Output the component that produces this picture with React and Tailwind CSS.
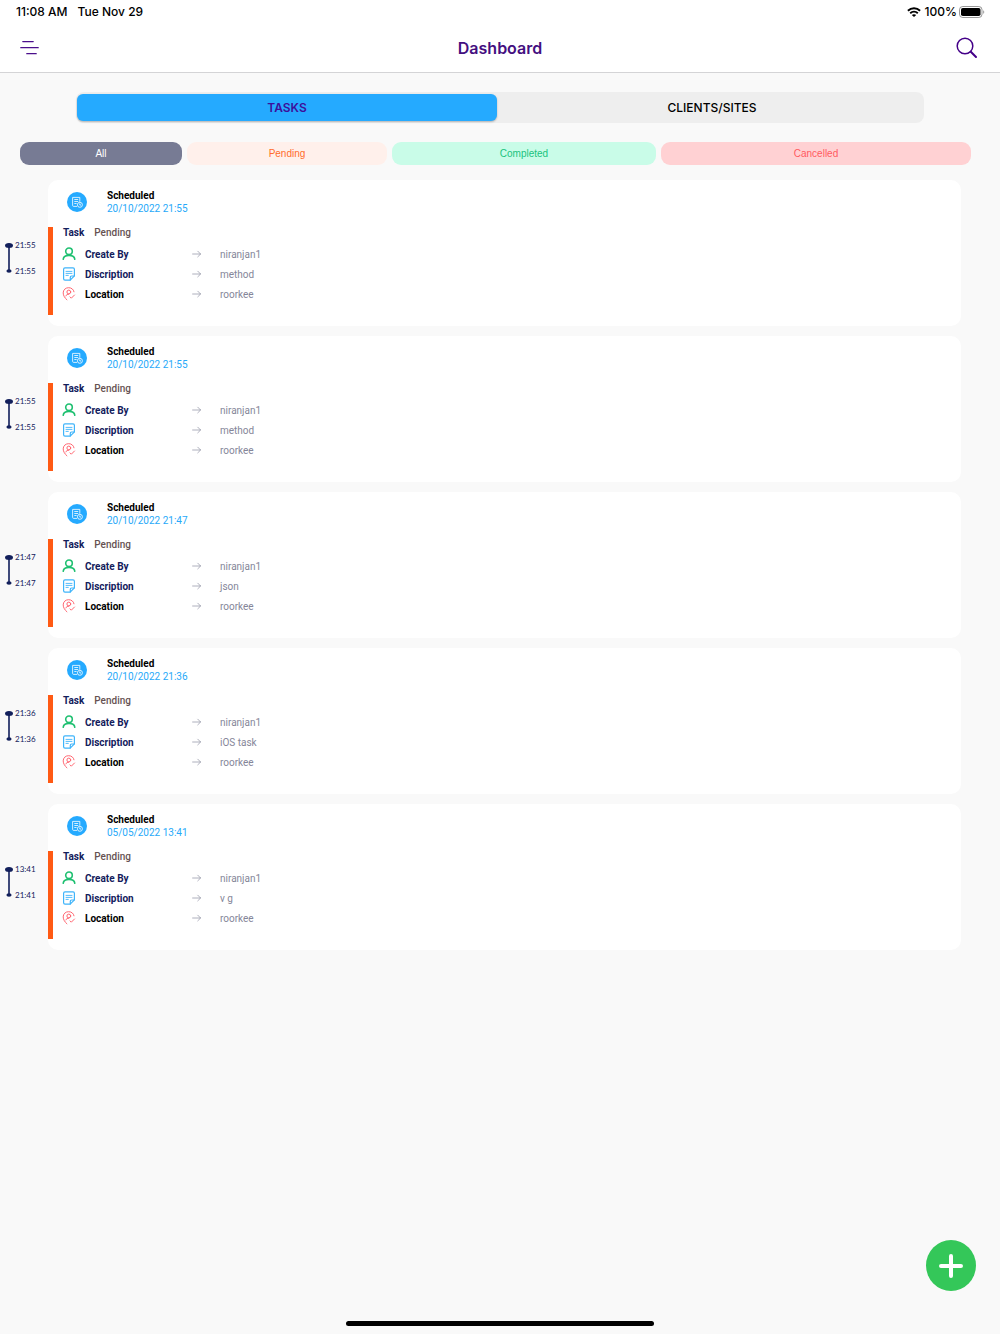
import { useState } from "react";

const filters = [
  { name: "All", className: "bg-[#777b94] text-white" },
  { name: "Pending", className: "bg-[#fff0eb] text-[#ff6c2c]" },
  { name: "Completed", className: "bg-[#c9fce8] text-[#18c37d]" },
  { name: "Cancelled", className: "bg-[#ffd1d3] text-[#ff5a60]" },
];

const tasks = [
  { date: "20/10/2022 21:55", start: "21:55", end: "21:55", by: "niranjan1", description: "method", location: "roorkee" },
  { date: "20/10/2022 21:55", start: "21:55", end: "21:55", by: "niranjan1", description: "method", location: "roorkee" },
  { date: "20/10/2022 21:47", start: "21:47", end: "21:47", by: "niranjan1", description: "json", location: "roorkee" },
  { date: "20/10/2022 21:36", start: "21:36", end: "21:36", by: "niranjan1", description: "iOS task", location: "roorkee" },
  { date: "05/05/2022 13:41", start: "13:41", end: "21:41", by: "niranjan1", description: "v g", location: "roorkee" },
];

function WifiIcon() {
  return (
    <svg className="h-[10px] w-[14px]" viewBox="0 0 14 10" fill="none" stroke="#000" strokeWidth="1.9">
      <path d="M0.9 3.8C4.4 0.4 9.6 0.4 13.1 3.8" />
      <path d="M3.2 6.2C5.4 4.2 8.6 4.2 10.8 6.2" />
      <path d="M7 9.9L4.8 7.9C6.1 6.9 7.9 6.9 9.2 7.9Z" fill="#000" stroke="none" />
    </svg>
  );
}

function BatteryIcon() {
  return (
    <svg className="h-3 w-[26px]" viewBox="0 0 26 12" fill="none">
      <rect x="0.5" y="0.5" width="22.5" height="11" rx="3.2" stroke="#000" strokeOpacity="0.4" />
      <rect x="2" y="2" width="19.5" height="8" rx="1.8" fill="#000" />
      <path d="M24.2 4.2C25.6 4.7 25.6 7.3 24.2 7.8Z" fill="#000" fillOpacity="0.4" />
    </svg>
  );
}

function MenuIcon() {
  return (
    <svg className="h-4 w-5" viewBox="0 0 20 16" stroke="#4b0f8c" strokeWidth="1.3" strokeLinecap="round">
      <path d="M2.8 1.6H13.2M0.8 7.7H18.2M6.8 13.7H16.2" />
    </svg>
  );
}

function SearchIcon() {
  return (
    <svg className="h-[22px] w-[22px]" viewBox="0 0 22 22" fill="none" stroke="#440088" strokeLinecap="round">
      <circle cx="9" cy="9" r="7.8" strokeWidth="1.5" />
      <path d="M14.8 14.8L20 20" strokeWidth="2" />
    </svg>
  );
}

function ScheduledIcon() {
  return (
    <svg className="h-5 w-5 shrink-0" viewBox="0 0 20 20" fill="none" stroke="#fff" strokeWidth="0.8">
      <circle cx="10" cy="10" r="10" fill="#25aaff" stroke="none" />
      <path d="M10 14.4H6.6C6 14.4 5.6 14 5.6 13.4V5.4H12.8V9.8" />
      <path d="M7.3 7.5H11.2M7.3 9.5H11.2M7.3 11.5H9.6" />
      <circle cx="12.9" cy="12.8" r="2.5" />
      <path d="M12.8 11.4V13H14" />
    </svg>
  );
}

function PersonIcon() {
  return (
    <svg className="h-[14px] w-[14px]" viewBox="0 0 14 14" fill="none" stroke="#1fc071" strokeWidth="1.6" strokeLinecap="round">
      <circle cx="7" cy="4.3" r="3.3" />
      <path d="M1.2 12.3C1.5 9.6 3.9 8.4 7 8.4C10.1 8.4 12.5 9.6 12.8 12.3" />
    </svg>
  );
}

function NoteIcon() {
  return (
    <svg className="h-[14px] w-[14px]" viewBox="0 0 14 14" fill="none" stroke="#3fb4fa" strokeWidth="1.2" strokeLinecap="round" strokeLinejoin="round">
      <path d="M12.4 8.9V2.2C12.4 1.3 11.8 0.8 11 0.8H3C2.2 0.8 1.6 1.3 1.6 2.2V11.8C1.6 12.7 2.2 13.2 3 13.2H8.2L12.4 8.9Z" />
      <path d="M8.3 13V10.2C8.3 9.4 8.8 9 9.5 9H12.2" />
      <path d="M4 4.4H10M4 6.4H10M4 8.4H6.3" strokeWidth="0.9" />
    </svg>
  );
}

function PinIcon() {
  return (
    <svg className="h-[14px] w-[14px]" viewBox="0 0 14 14" fill="none" stroke="#ff6570" strokeWidth="1" strokeLinecap="round" strokeLinejoin="round">
      <path d="M4.9 12.8C2.8 11 1.2 8.5 1.2 5.9C1.2 2.8 3.6 0.7 6.6 0.7C9.4 0.7 11.6 2.4 12 4.8" />
      <circle cx="6.8" cy="5" r="1.9" />
      <path d="M3.9 8.9C4.3 7.7 5.3 7.2 6.8 7.2" />
      <path d="M8 9.9L9.3 11.2L12.5 8" />
    </svg>
  );
}

function ArrowIcon() {
  return (
    <svg className="h-2 w-[10px]" viewBox="0 0 10 8" fill="none" stroke="#9a9cac" strokeWidth="0.8" strokeLinecap="round" strokeLinejoin="round">
      <path d="M0.6 4H8.6M5.8 1.2L8.6 4L5.8 6.8" />
    </svg>
  );
}

function DetailRow({ icon, label, labelClass, value }) {
  return (
    <div className="flex h-5 items-center">
      <span className="w-[23px] shrink-0">{icon}</span>
      <dt className={`w-[107px] shrink-0 font-bold ${labelClass}`}>{label}</dt>
      <span className="w-7 shrink-0">
        <ArrowIcon />
      </span>
      <dd className="text-[#858699]">{value}</dd>
    </div>
  );
}

function TimeRail({ start, end }) {
  return (
    <div className="flex w-12 shrink-0 gap-[2px] pt-[60px] pl-[5px] font-[Lato,sans-serif] text-[8px] leading-[10px] text-[#13205c]">
      <svg className="h-9 w-2 shrink-0" viewBox="0 0 8 36" fill="#13205c">
        <ellipse cx="4" cy="5.5" rx="4" ry="2.5" />
        <rect x="3.2" y="5" width="1.6" height="25" />
        <ellipse cx="4" cy="31" rx="2.6" ry="1.7" />
      </svg>
      <div className="flex h-9 flex-col justify-between">
        <time>{start}</time>
        <time>{end}</time>
      </div>
    </div>
  );
}

function TaskItem({ task }) {
  return (
    <li className="flex">
      <TimeRail start={task.start} end={task.end} />
      <article className="flex-1 rounded-[10px] bg-white pt-[9px] pb-[11px] text-[10px]">
        <div className="flex items-center gap-5 pb-3 pl-[19px] leading-[13px]">
          <ScheduledIcon />
          <div>
            <h2 className="font-bold text-black">Scheduled</h2>
            <p className="text-[#27a9f9]">{task.date}</p>
          </div>
        </div>
        <div className="border-l-5 border-[#ff5a14] pb-[11px] pl-[9px]">
          <p className="flex gap-[10px] pl-px leading-3">
            <span className="font-bold text-[#13205c]">Task</span>
            <span className="font-medium text-[#665252]">Pending</span>
          </p>
          <dl className="pt-[5px]">
            <DetailRow icon={<PersonIcon />} label="Create By" labelClass="text-[#13205c]" value={task.by} />
            <DetailRow icon={<NoteIcon />} label="Discription" labelClass="text-[#13205c]" value={task.description} />
            <DetailRow icon={<PinIcon />} label="Location" labelClass="text-black" value={task.location} />
          </dl>
        </div>
      </article>
    </li>
  );
}

export default function App() {
  const [tab, setTab] = useState("tasks");

  const tabClass = (name) =>
    `rounded-md ${
      tab === name
        ? "bg-[#25aaff] font-semibold text-[#3d0f9b] shadow-[0_1px_2px_rgba(0,0,0,0.25)]"
        : "font-medium text-black"
    }`;

  return (
    <div className="min-h-screen bg-[#f9f9f9] font-[Roboto,sans-serif]">
      <header className="border-b border-[#d4d4d6] bg-white font-[Inter,sans-serif]">
        <div className="flex h-6 items-center justify-between pr-[15px] pl-4 text-xs font-medium text-black">
          <div className="flex gap-[10px]">
            <span>11:08 AM</span>
            <span>Tue Nov 29</span>
          </div>
          <div className="flex items-center">
            <WifiIcon />
            <span className="pr-[2px] pl-1">100%</span>
            <BatteryIcon />
          </div>
        </div>
        <nav className="flex h-12 items-center justify-between px-5">
          <button type="button" aria-label="Menu" className="flex w-6">
            <MenuIcon />
          </button>
          <h1 className="text-base font-semibold text-[#440f80]">Dashboard</h1>
          <button type="button" aria-label="Search" className="w-6">
            <SearchIcon />
          </button>
        </nav>
      </header>

      <main>
        <div className="mx-[76px] mt-[19px] grid h-[31px] grid-cols-[420fr_426fr] rounded-lg bg-[#eeeeee] px-px py-[2px] font-[Inter,sans-serif] text-xs">
          <button type="button" className={tabClass("tasks")} onClick={() => setTab("tasks")}>
            TASKS
          </button>
          <button type="button" className={`pl-1 ${tabClass("clients")}`} onClick={() => setTab("clients")}>
            CLIENTS/SITES
          </button>
        </div>

        <div className="mt-[19px] mr-[29px] ml-5 grid grid-cols-[162fr_200fr_264fr_310fr] gap-[5px] font-['Liberation_Sans',Arial,sans-serif] text-[10px]">
          {filters.map((f) => (
            <button key={f.name} type="button" className={`h-[23px] rounded-[9px] ${f.className}`}>
              {f.name}
            </button>
          ))}
        </div>

        <ul className="mt-[15px] mr-[39px] flex flex-col gap-[10px]">
          {tasks.map((task, idx) => (
            <TaskItem key={idx} task={task} />
          ))}
        </ul>
      </main>

      <button
        type="button"
        aria-label="Add task"
        className="fixed right-6 bottom-[43px] flex h-[51px] w-[50px] items-center justify-center rounded-[50%] bg-[#34c759]"
      >
        <svg className="h-6 w-6" viewBox="0 0 24 24" stroke="#fff" strokeWidth="4" strokeLinecap="round">
          <path d="M12 2V22M2 12H22" />
        </svg>
      </button>
      <div className="fixed bottom-2 left-1/2 h-[5px] w-[308px] -translate-x-1/2 rounded-full bg-black" />
    </div>
  );
}
